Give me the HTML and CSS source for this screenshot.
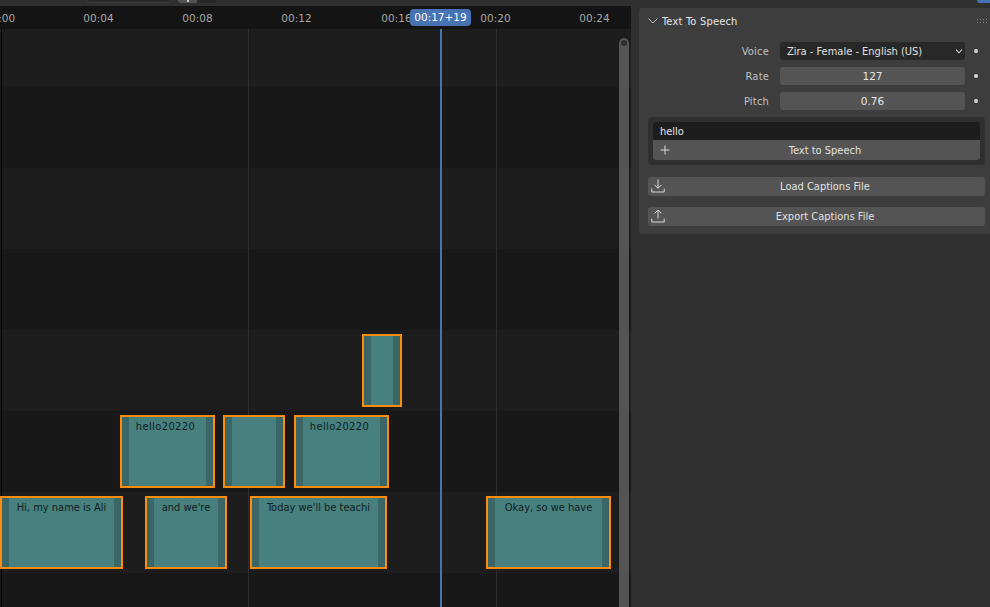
FILE: index.html
```html
<!DOCTYPE html>
<html lang="en">
<head>
<meta charset="utf-8">
<title>Sequencer</title>
<link rel="stylesheet" href="styles.css">
</head>
<body>
<div class="app">
  <div class="topstrip">
    <div class="hdr-field"></div>
    <div class="hdr-toggle"><span class="on"><i></i></span><span class="off"></span></div>
    <div class="tab-corner"></div>
  </div>
  <div class="main">
    <section class="timeline">
      <div class="ruler">
        <span class="tick t0">00:00</span>
        <span class="tick t4">00:04</span>
        <span class="tick t8">00:08</span>
        <span class="tick t12">00:12</span>
        <span class="tick t16">00:16</span>
        <span class="tick t20">00:20</span>
        <span class="tick t24">00:24</span>
        <span class="current">00:17+19</span>
      </div>
      <div class="tracks">
        <div class="band b-short"></div>
        <div class="band alt"></div>
        <div class="band"></div>
        <div class="band alt"></div>
        <div class="band"></div>
        <div class="band alt"></div>
        <div class="band"></div>
        <div class="band alt"></div>

        <i class="vline v0"></i>
        <i class="vline v12"></i>
        <i class="vline v20"></i>

        <div class="strip s-a"></div>
        <div class="strip s-b"><span class="digits">hello20220</span></div>
        <div class="strip s-c"></div>
        <div class="strip s-d"><span class="digits">hello20220</span></div>
        <div class="strip s-e"><span>Hi, my name is Ali</span></div>
        <div class="strip s-f"><span>and we're</span></div>
        <div class="strip s-g"><span>Today we'll be teachi</span></div>
        <div class="strip s-h"><span>Okay, so we have</span></div>

        <i class="playhead"></i>
        <div class="scrollbar"><b></b></div>
      </div>
    </section>
    <aside class="sidebar">
      <div class="panel">
        <div class="panel-head">
          <svg class="chev" width="10" height="6" viewBox="0 0 10 6"><path d="M.5.5 5 5 9.500.5" fill="none" stroke="#bdbdbd" stroke-width="1"/></svg>
          <span class="panel-title">Text To Speech</span>
          <svg class="grip" width="10" height="5" viewBox="0 0 10 5"><path d="M0 0h1v1H0zM3 0h1v1H3zM6 0h1v1H6zM9 0h1v1H9zM0 3h1v1H0zM3 3h1v1H3zM6 3h1v1H6zM9 3h1v1H9z" fill="#8a8a8a"/></svg>
        </div>
        <div class="prop first-prop">
          <label>Voice</label>
          <div class="field select"><span>Zira - Female - English (US)</span>
            <svg width="8" height="5" viewBox="0 0 8 5"><path d="M1 .7 4 3.800 7 .7" fill="none" stroke="#d0d0d0" stroke-width="1.100"/></svg>
          </div>
          <i class="dot"></i>
        </div>
        <div class="prop">
          <label>Rate</label>
          <div class="field num">127</div>
          <i class="dot"></i>
        </div>
        <div class="prop">
          <label>Pitch</label>
          <div class="field num">0.76</div>
          <i class="dot"></i>
        </div>
        <div class="box">
          <div class="textin">hello</div>
          <div class="btn joined">
            <svg class="ico" width="12" height="12" viewBox="0 0 12 12"><path d="M6 1.500v9M1.500 6h9" stroke="#d8d8d8" stroke-width="1" fill="none"/></svg>
            <span>Text to Speech</span>
          </div>
        </div>
        <div class="btn wide first">
          <svg class="ico" width="14" height="14" viewBox="0 0 14 14"><path d="M7 .5v8.500M3.500 5.800 7 9.300l3.500-3.500M.8 9.500v3.500h12.400V9.500" stroke="#d8d8d8" stroke-width="1" fill="none"/></svg>
          <span>Load Captions File</span>
        </div>
        <div class="btn wide">
          <svg class="ico" width="14" height="14" viewBox="0 0 14 14"><path d="M7 9.500V1M3.500 4.500 7 1l3.500 3.500M.8 9.500v3.500h12.400V9.500" stroke="#d8d8d8" stroke-width="1" fill="none"/></svg>
          <span>Export Captions File</span>
        </div>
      </div>
    </aside>
  </div>
</div>
</body>
</html>
```
FILE: styles.css
```css
* { box-sizing: border-box; }
html, body { margin: 0; height: 100%; overflow: hidden; background: #303030; }
body { font-family: "DejaVu Sans", "Liberation Sans", sans-serif; font-size: 11px; font-stretch: condensed; color: #d9d9d9; }
.app { width: 990px; height: 607px; display: flex; flex-direction: column; position: relative; overflow: hidden; }
.topstrip { height: 6px; background: #303030; position: relative; flex: none; }
.hdr-field { position: absolute; left: 87px; top: -6px; width: 84px; height: 9px; background: #282828; border: 1px solid #3d3d3d; border-radius: 3px; }
.hdr-toggle { position: absolute; left: 178px; top: -6px; width: 38px; height: 9px; display: flex; border-radius: 3px; overflow: hidden; }
.hdr-toggle .on { width: 19px; background: #545454; position: relative; }
.hdr-toggle .on i { position: absolute; left: 9px; top: 6px; width: 2px; height: 2px; background: #c8c8c8; }
.hdr-toggle .off { width: 19px; background: #282828; }
.tab-corner { position: absolute; right: 0; top: -3px; width: 13px; height: 6px; background: #4772b3; border-radius: 0 0 0 3px; }
.main { flex: 1; display: flex; min-height: 0; }
.timeline { width: 631px; flex: none; display: flex; flex-direction: column; position: relative; }
.ruler { height: 23px; background: #141414; position: relative; flex: none; color: #a6a6a6; font-size: 10.5px; font-stretch: normal; }
.tick { position: absolute; top: 6px; line-height: 13px; transform: translateX(-50%); }
.t0 { left: 0; }
.t4 { left: 98.500px; }
.t8 { left: 197.500px; }
.t12 { left: 296.500px; }
.t16 { left: 396.500px; }
.t20 { left: 495.500px; }
.t24 { left: 594.500px; }
.current { position: absolute; left: 410px; top: 3px; width: 61px; height: 17px; background: #4772b3; color: #fff; border-radius: 4px; text-align: center; line-height: 17px; }
.tracks { flex: 1; position: relative; background: #181818; display: flex; flex-direction: column; overflow: hidden; }
.band { height: 81px; flex: none; background: #1d1d1d; }
.band.alt { background: #181818; }
.b-short { height: 58px; }
.vline { position: absolute; top: 0; bottom: 0; width: 1px; background: #2e2e2e; }
.v0 { left: 1px; background: #000; }
.v12 { left: 248px; }
.v20 { left: 496px; }
.strip { position: absolute; height: 73px; background: #47807f; border: 2px solid #ff8c0a; color: #10201f; text-align: center; line-height: 13px; overflow: hidden; padding: 3px 8px 0; white-space: nowrap; }
.strip::before, .strip::after { content: ""; position: absolute; top: 0; bottom: 0; width: 7px; background: #3a6666; }
.strip::before { left: 0; }
.strip::after { right: 0; }
.digits { letter-spacing: .4px; padding-right: 4px; }
.s-a { left: 362px; top: 305px; width: 40px; }
.s-b { left: 120px; top: 386px; width: 95px; }
.s-c { left: 223px; top: 386px; width: 62px; }
.s-d { left: 294px; top: 386px; width: 95px; }
.s-e { left: 0; top: 467px; width: 123px; }
.s-f { left: 145px; top: 467px; width: 82px; }
.s-g { left: 250px; top: 467px; width: 137px; }
.s-h { left: 486px; top: 467px; width: 125px; }
.playhead { position: absolute; left: 440px; top: 0; bottom: 0; width: 2px; background: #4772b3; }
.scrollbar { position: absolute; left: 619px; top: 9px; bottom: 0; width: 10px; background: #545454; border-radius: 5px 5px 0 0; }
.scrollbar b { position: absolute; left: 2px; top: 2px; width: 6px; height: 6px; border-radius: 3px; background: #303030; }
.sidebar { flex: 1; background: #303030; padding: 2px 0 0 8px; }
.panel { height: 226px; background: #3d3d3d; border-radius: 4px 0 0 4px; padding-left: 9px; padding-right: 5px; display: flex; flex-direction: column; }
.panel-head { height: 26px; display: flex; align-items: center; flex: none; margin-right: -2px; margin-top: 0; }
.panel-head .chev { flex: none; }
.panel-title { margin-left: 4px; flex: 1; color: #e6e6e6; letter-spacing: .2px; }
.prop { display: flex; align-items: center; height: 18px; margin-bottom: 7px; flex: none; }
.first-prop { margin-top: 8px; }
.prop label { width: 121px; text-align: right; color: #c2c2c2; flex: none; letter-spacing: .2px; }
.field { margin-left: 11px; width: 185px; height: 18px; border-radius: 3px; flex: none; display: flex; align-items: center; }
.select { background: #282828; color: #e0e0e0; padding: 0 2px 0 7px; justify-content: space-between; }
.num { background: #545454; color: #e6e6e6; justify-content: center; font-size: 10.5px; font-stretch: normal; }
.dot { width: 4px; height: 4px; border-radius: 2px; background: #d8d8d8; margin-left: 9px; flex: none; }
.box { background: #2f2f2f; border-radius: 4px; padding: 5px; height: 48px; flex: none; }
.textin { height: 18px; background: #1d1d1d; border-radius: 3px 3px 0 0; padding-left: 7px; line-height: 20px; color: #e6e6e6; }
.btn { background: #545454; display: flex; align-items: center; justify-content: center; position: relative; color: #e0e0e0; height: 20px; padding-left: 17px; }
.btn .ico { position: absolute; left: 6px; }
.joined { border-radius: 0 0 3px 3px; }
.wide { border-radius: 3px; height: 19px; margin-top: 11px; flex: none; }
.wide.first { margin-top: 12px; }
.wide .ico { left: 3px; top: 2px; }
```
